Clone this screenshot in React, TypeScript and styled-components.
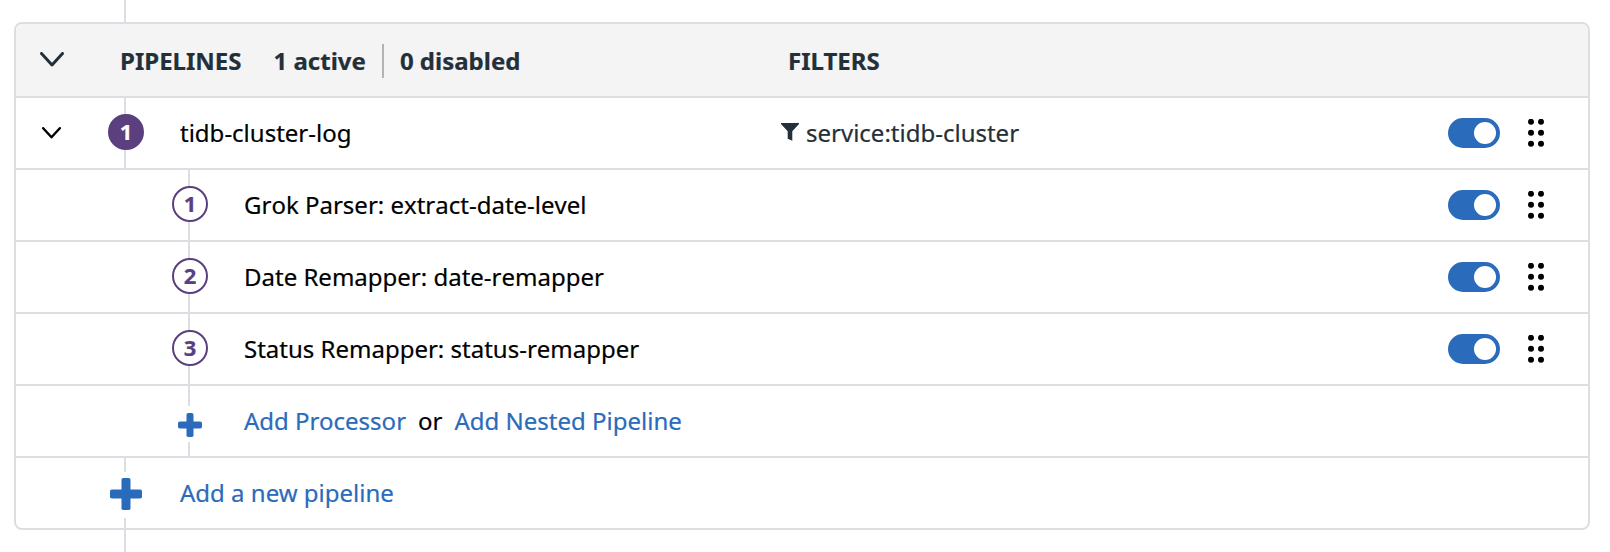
import React from "react";
import styled, { createGlobalStyle } from "styled-components";

const color = {
  line: "#dddde3",
  divider: "#b2b3b7",
  header: "#f4f4f4",
  heading: "#243039",
  purple: "#5b3f7f",
  blue: "#2a6bbc",
};

const GlobalStyle = createGlobalStyle`
  *, *::before, *::after { box-sizing: border-box; }
  body {
    margin: 0;
    background: #fff;
    color: #000;
    font: 400 24px/32px "Noto Sans", sans-serif;
    -webkit-text-stroke: 0.2px;
  }
`;

const Page = styled.main`
  display: flex;
  flex-direction: column;
  height: 552px;
  padding: 0 20px 0 14px;
  overflow: hidden;
`;

const Stub = styled.div`
  flex: 1 0 22px;
  width: 2px;
  margin-left: 110px;
  background: ${color.line};
`;

const Card = styled.section`
  flex: none;
  height: 508px;
  border: 2px solid ${color.line};
  border-radius: 8px;
  overflow: hidden;
`;

const Row = styled.div<{ $nested?: boolean }>`
  display: grid;
  grid-template-columns: ${(p) =>
    p.$nested ? "156px 36px 36px 537px 1fr auto" : "92px 36px 36px 601px 1fr auto"};
  height: 72px;
  border-bottom: 2px solid ${color.line};
  &:last-child {
    border-bottom: 0;
    height: 70px;
  }
`;

const HeaderRow = styled.header`
  display: grid;
  grid-template-columns: 104px 668px 1fr;
  height: 74px;
  background: ${color.header};
  border-bottom: 2px solid ${color.line};
  color: ${color.heading};
  font-weight: 700;
`;

const Heading = styled.div`
  display: flex;
  align-items: center;
  padding-top: 2px;
`;

const Count = styled.span`
  margin-left: 32px;
  & + & {
    display: flex;
    align-items: center;
    height: 34px;
    margin-left: 16px;
    padding-left: 16px;
    border-left: 2px solid ${color.divider};
  }
`;

const Toggler = styled.button<{ $top: number; $left: number }>`
  display: flex;
  align-items: flex-start;
  padding: ${(p) => p.$top}px 0 0 ${(p) => p.$left}px;
  border: 0;
  background: none;
  color: inherit;
`;

const Rail = styled.div<{ $top?: number; $joined?: boolean }>`
  display: flex;
  align-items: flex-start;
  padding-top: ${(p) => p.$top ?? 16}px;
  margin-bottom: ${(p) => (p.$joined ? -2 : 0)}px;
  background: linear-gradient(${color.line}, ${color.line}) 16px 0 / 2px 100% no-repeat;
`;

const Badge = styled.span<{ $filled?: boolean }>`
  display: flex;
  align-items: center;
  justify-content: center;
  width: 36px;
  height: 36px;
  padding-bottom: 2px;
  border: 2px solid ${color.purple};
  border-radius: 50%;
  background: ${(p) => (p.$filled ? color.purple : "#fff")};
  color: ${(p) => (p.$filled ? "#fff" : color.purple)};
  font-size: 22px;
  line-height: 30px;
  font-weight: 700;
`;

const PlusBox = styled.span<{ $height: number; $shift: number }>`
  display: flex;
  align-items: flex-start;
  justify-content: center;
  width: 36px;
  height: ${(p) => p.$height}px;
  padding-top: ${(p) => p.$shift}px;
  background: #fff;
  color: ${color.blue};
`;

const Name = styled.div`
  display: flex;
  grid-column-start: 4;
  align-items: center;
  gap: 12px;
  white-space: nowrap;
  font-kerning: none;
`;

const Link = styled.a`
  color: ${color.blue};
  text-decoration: none;
  font-kerning: normal;
`;

const Filter = styled.div`
  display: flex;
  align-items: center;
  gap: 7px;
  color: ${color.heading};
  font-kerning: none;
  svg { margin-bottom: 2px; }
`;

const Actions = styled.div`
  display: flex;
  grid-column-start: 6;
  align-items: center;
  gap: 28px;
  padding-right: 44px;
`;

const Switch = styled.button`
  display: flex;
  justify-content: flex-end;
  width: 52px;
  height: 30px;
  padding: 4px;
  border: 0;
  border-radius: 15px;
  background: ${color.blue};
`;

const Knob = styled.span`
  width: 22px;
  height: 22px;
  border-radius: 50%;
  background: #fff;
`;

const Grip = styled.svg`
  display: block;
  width: 16px;
  height: 28px;
`;

function Chevron({ w, h, stroke }: { w: number; h: number; stroke: number }) {
  const p = stroke / 2;
  return (
    <svg width={w} height={h} viewBox={`0 0 ${w} ${h}`} fill="none">
      <path
        d={`M${p} ${p}L${w / 2} ${h - p - 0.5}L${w - p} ${p}`}
        stroke="currentColor"
        strokeWidth={stroke}
        strokeLinecap="round"
        strokeLinejoin="round"
      />
    </svg>
  );
}

function Plus({ size, bar }: { size: number; bar: number }) {
  const o = (size - bar) / 2;
  return (
    <svg width={size} height={size} fill="currentColor">
      <rect x={o} width={bar} height={size} rx="1.8" />
      <rect y={o} width={size} height={bar} rx="1.8" />
    </svg>
  );
}

function RowActions() {
  return (
    <Actions>
      <Switch role="switch" aria-checked="true">
        <Knob />
      </Switch>
      <Grip viewBox="0 0 16 28">
        {[2.8, 13.8, 24.8].map((y) => (
          <g key={y}>
            <circle cx="3" cy={y} r="3" />
            <circle cx="13" cy={y} r="3" />
          </g>
        ))}
      </Grip>
    </Actions>
  );
}

const processors = [
  "Grok Parser: extract-date-level",
  "Date Remapper: date-remapper",
  "Status Remapper: status-remapper",
];

export default function App() {
  return (
    <Page>
      <GlobalStyle />
      <Stub />
      <Card>
        <HeaderRow>
          <Toggler $top={28} $left={24} aria-label="Collapse all">
            <Chevron w={24} h={15} stroke={3} />
          </Toggler>
          <Heading>
            <span>PIPELINES</span>
            <Count>1 active</Count>
            <Count>0 disabled</Count>
          </Heading>
          <Heading>FILTERS</Heading>
        </HeaderRow>
        <Row>
          <Toggler $top={29} $left={26} aria-label="Collapse pipeline">
            <Chevron w={19} h={12} stroke={2.4} />
          </Toggler>
          <Rail>
            <Badge $filled>1</Badge>
          </Rail>
          <Name>tidb-cluster-log</Name>
          <Filter>
            <svg width="18" height="18" viewBox="0 0 18 18" fill="currentColor">
              <path d="M0 0H18V1L11.3 8.2V17.8L6.7 15.8V8.2L0 1Z" />
            </svg>
            service:tidb-cluster
          </Filter>
          <RowActions />
        </Row>
        {processors.map((name, i) => (
          <Row $nested key={name}>
            <span />
            <Rail $joined>
              <Badge>{i + 1}</Badge>
            </Rail>
            <Name>{name}</Name>
            <RowActions />
          </Row>
        ))}
        <Row $nested>
          <span />
          <Rail $top={20}>
            <PlusBox $height={36} $shift={7}>
              <Plus size={24} bar={7} />
            </PlusBox>
          </Rail>
          <Name>
            <Link>Add Processor</Link>
            <span>or</span>
            <Link>Add Nested Pipeline</Link>
          </Name>
        </Row>
        <Row>
          <span />
          <Rail $top={14}>
            <PlusBox $height={46} $shift={6}>
              <Plus size={32} bar={9} />
            </PlusBox>
          </Rail>
          <Name>
            <Link>Add a new pipeline</Link>
          </Name>
        </Row>
      </Card>
      <Stub />
    </Page>
  );
}
